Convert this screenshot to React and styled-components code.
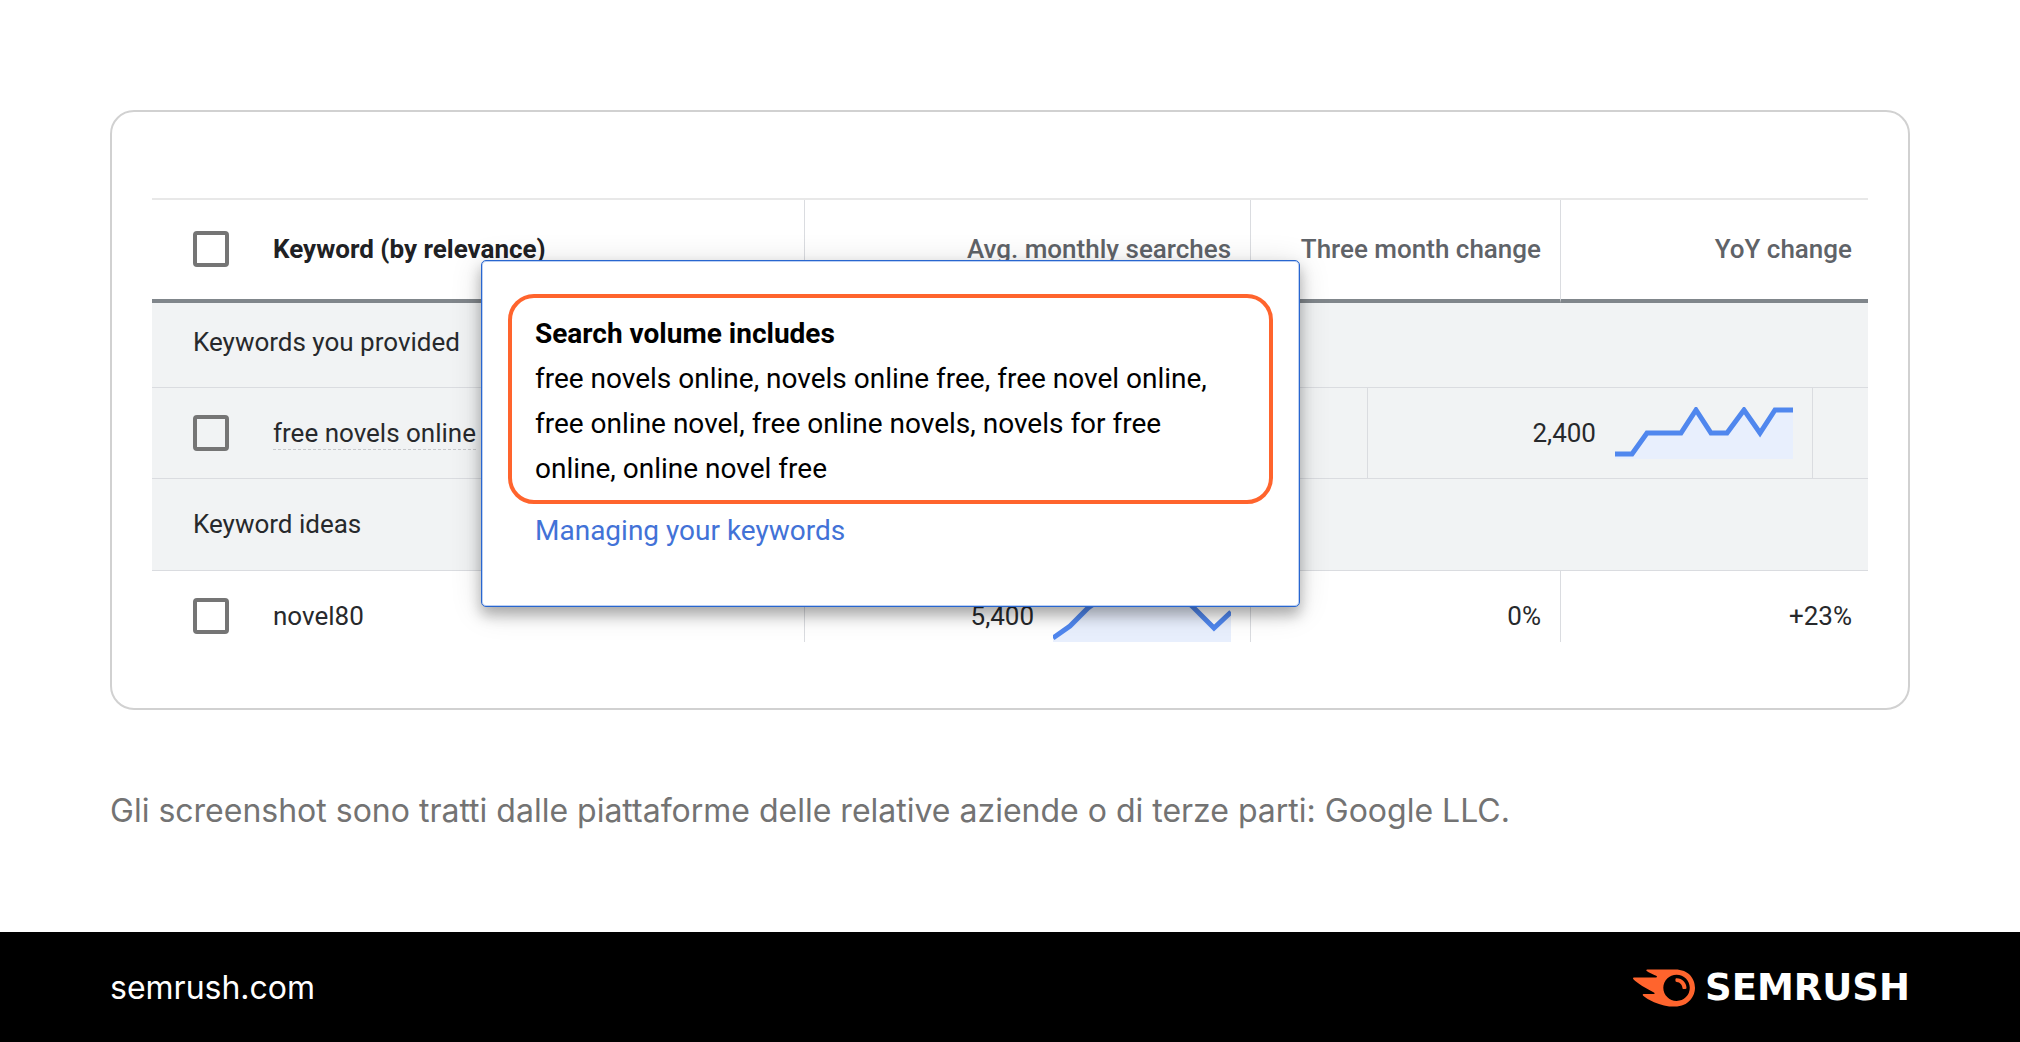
import styled, { createGlobalStyle } from "styled-components";
import { SiSemrush } from "react-icons/si";

const GlobalStyle = createGlobalStyle`
  * {
    box-sizing: border-box;
  }
  body {
    margin: 0;
    background: #ffffff;
    font-family: Roboto, "Liberation Sans", sans-serif;
  }
`;

const PageStyled = styled.div`
  min-height: 100vh;
  display: flex;
  flex-direction: column;
`;

const MainStyled = styled.main`
  flex: 1;
  padding: 110px 110px 0;
`;

const Card = styled.section`
  border: 2px solid #d1d1d1;
  border-radius: 24px;
  padding: 86px 40px 66px;
`;

const TableWrap = styled.div`
  position: relative;
`;

const Table = styled.table`
  width: 100%;
  table-layout: fixed;
  border-collapse: separate;
  border-spacing: 0;
  border-top: 2px solid #e8e8e8;
  color: #27292c;
  font-size: 26px;
  line-height: 32px;
`;

const Col = styled.col`
  width: ${({ $width }) => $width};
`;

const HeadRow = styled.tr`
  height: 103px;
  th {
    border-bottom: 4px solid #80868b;
  }
`;

const GroupRow = styled.tr`
  height: ${({ $first }) => ($first ? "85px" : "92px")};
  background: #f1f3f4;
  th {
    padding: ${({ $first }) => ($first ? "0 41px 6px" : "0 41px 2px")};
    border-bottom: 1px solid #dadce0;
    text-align: left;
    font-weight: 400;
  }
`;

const KeywordRow = styled.tr`
  height: ${({ $last }) => ($last ? "71px" : "91px")};
  background: ${({ $provided }) => ($provided ? "#f1f3f4" : "#ffffff")};
  td {
    border-bottom: ${({ $last }) => ($last ? "none" : "1px solid #dadce0")};
    ${({ $last }) => $last && "padding-top: 19px;"}
  }
`;

const HeadCell = styled.th`
  padding: 0 ${({ $end }) => ($end ? "16px" : "19px")} 2px 0;
  border-right: ${({ $divider }) => ($divider ? "1px solid #dadce0" : "none")};
  color: ${({ $active }) => ($active ? "#202124" : "#5f6368")};
  font-weight: ${({ $active }) => ($active ? 700 : 500)};
  text-align: ${({ $active }) => ($active ? "left" : "right")};
  white-space: nowrap;
`;

const Cell = styled.td`
  padding: 0 ${({ $end }) => ($end ? "16px" : "19px")} 0 0;
  border-right: ${({ $divider }) => ($divider ? "1px solid #dadce0" : "none")};
  text-align: ${({ $left }) => ($left ? "left" : "right")};
  white-space: nowrap;
`;

const Checkbox = styled.input`
  appearance: none;
  display: block;
  width: 36px;
  height: 36px;
  margin: 0 0 0 41px;
  border: 4px solid #757575;
  border-radius: 4px;
  background: transparent;
  &:checked {
    background: #757575;
  }
`;

const Term = styled.span`
  display: inline-block;
  border-bottom: ${({ $dashed }) => ($dashed ? "1px dashed #c6c8cb" : "none")};
`;

const Volume = styled.div`
  height: 52px;
  display: flex;
  justify-content: flex-end;
  align-items: center;
  gap: 19px;
  svg {
    display: block;
    width: 178px;
    height: 52px;
  }
`;

const Popup = styled.div`
  position: absolute;
  top: 62px;
  left: 329px;
  width: 819px;
  padding: 33px 26px 53px;
  background: #ffffff;
  border: 1px solid #2866cf;
  border-radius: 5px;
  box-shadow: inset 0 0 0 1px #bcd0f3, 0 8px 14px rgba(0, 0, 0, 0.28),
    0 4px 32px rgba(0, 0, 0, 0.14);
  color: #000000;
  font-size: 28px;
  line-height: 45px;
  a {
    display: inline-block;
    margin-left: 27px;
    color: #4272d7;
    text-decoration: none;
  }
`;

const Highlight = styled.div`
  margin-bottom: 4px;
  padding: 13px 23px 9px;
  border: 4px solid #ff642d;
  border-radius: 26px;
  h2 {
    margin: 0;
    font-size: 28px;
    font-weight: 700;
    line-height: 45px;
  }
  p {
    margin: 0;
  }
`;

const Caption = styled.p`
  margin: 79px 0 0;
  color: #737373;
  font-family: Inter, "Liberation Sans", sans-serif;
  font-size: 32px;
  line-height: 44px;
`;

const FooterStyled = styled.footer`
  height: 110px;
  padding: 2px 110px 0;
  display: flex;
  justify-content: space-between;
  align-items: center;
  background: #000000;
  a {
    color: #ffffff;
    font-family: Inter, "Liberation Sans", sans-serif;
    font-size: 32px;
    line-height: 40px;
    text-decoration: none;
  }
`;

const Logo = styled.div`
  display: flex;
  align-items: center;
  gap: 10px;
  color: #ffffff;
  font-family: "DejaVu Sans", sans-serif;
  font-size: 37px;
  font-weight: 700;
  line-height: 40px;
  svg {
    width: 62px;
    height: 62px;
    color: #ff642d;
  }
`;

const providedTrend =
  "0,47 17,47 32,26 66,26 81,3 96,26 112,26 129,3 145,26 160,3 178,3";
const ideaTrend =
  "0,48 17,36 35,18 52,6 70,3 88,3 105,3 125,3 141,18 161,38 178,22";

const Sparkline = ({ points }) => {
  return (
    <svg viewBox="0 0 178 52" aria-hidden="true">
      <polygon points={`${points} 178,52 0,52`} fill="#e8effd" />
      <polyline points={points} fill="none" stroke="#5087ee" strokeWidth="5" />
    </svg>
  );
};

const KeywordTable = () => {
  return (
    <Table>
      <colgroup>
        <Col $width="121px" />
        <Col $width="31%" />
        <Col $width="26%" />
        <Col />
        <Col $width="193px" />
        <Col $width="252px" />
        <Col $width="55px" />
      </colgroup>
      <thead>
        <HeadRow>
          <HeadCell>
            <Checkbox type="checkbox" aria-label="Select all keywords" />
          </HeadCell>
          <HeadCell $active $divider>
            Keyword (by relevance)
          </HeadCell>
          <HeadCell $divider>Avg. monthly searches</HeadCell>
          <HeadCell $divider colSpan={2}>
            Three month change
          </HeadCell>
          <HeadCell $end colSpan={2}>
            YoY change
          </HeadCell>
        </HeadRow>
      </thead>
      <tbody>
        <GroupRow $first>
          <th colSpan={7}>Keywords you provided</th>
        </GroupRow>
        <KeywordRow $provided>
          <Cell>
            <Checkbox type="checkbox" aria-label="free novels online" />
          </Cell>
          <Cell $left>
            <Term $dashed>free novels online</Term>
          </Cell>
          <Cell $divider colSpan={2} />
          <Cell $divider colSpan={2}>
            <Volume>
              2,400
              <Sparkline points={providedTrend} />
            </Volume>
          </Cell>
          <Cell />
        </KeywordRow>
        <GroupRow>
          <th colSpan={7}>Keyword ideas</th>
        </GroupRow>
        <KeywordRow $last>
          <Cell>
            <Checkbox type="checkbox" aria-label="novel80" />
          </Cell>
          <Cell $left $divider>
            <Term>novel80</Term>
          </Cell>
          <Cell $divider>
            <Volume>
              5,400
              <Sparkline points={ideaTrend} />
            </Volume>
          </Cell>
          <Cell $divider colSpan={2}>
            0%
          </Cell>
          <Cell $end colSpan={2}>
            +23%
          </Cell>
        </KeywordRow>
      </tbody>
    </Table>
  );
};

const App = () => {
  return (
    <PageStyled>
      <GlobalStyle />
      <MainStyled>
        <Card>
          <TableWrap>
            <KeywordTable />
            <Popup>
              <Highlight>
                <h2>Search volume includes</h2>
                <p>
                  free novels online, novels online free, free novel online,
                  free online novel, free online novels, novels for free online,
                  online novel free
                </p>
              </Highlight>
              <a href="#keywords">Managing your keywords</a>
            </Popup>
          </TableWrap>
        </Card>
        <Caption>
          Gli screenshot sono tratti dalle piattaforme delle relative aziende o
          di terze parti: Google LLC.
        </Caption>
      </MainStyled>
      <FooterStyled>
        <a href="https://semrush.com">semrush.com</a>
        <Logo>
          <SiSemrush aria-hidden="true" />
          SEMRUSH
        </Logo>
      </FooterStyled>
    </PageStyled>
  );
};

export default App;
